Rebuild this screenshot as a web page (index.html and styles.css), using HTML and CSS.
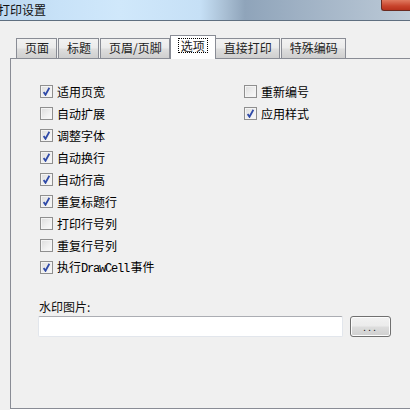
FILE: index.html
```html
<!DOCTYPE html>
<html lang="zh">
<head>
<meta charset="utf-8">
<title>打印设置</title>
<link rel="stylesheet" href="styles.css">
</head>
<body>
<div class="window">
  <div class="titlebar">
    <span class="title">打印设置</span>
    <span class="close"></span>
  </div>
  <div class="client">
    <div class="tabs">
      <div class="tab">页面</div>
      <div class="tab">标题</div>
      <div class="tab">页眉/页脚</div>
      <div class="tab tab-active"><span class="focus">选项</span></div>
      <div class="tab">直接打印</div>
      <div class="tab">特殊编码</div>
    </div>
    <div class="panel">
      <div class="options">
        <div class="col">
          <label class="check"><span class="box on"></span><span>适用页宽</span></label>
          <label class="check"><span class="box"></span><span>自动扩展</span></label>
          <label class="check"><span class="box on"></span><span>调整字体</span></label>
          <label class="check"><span class="box on"></span><span>自动换行</span></label>
          <label class="check"><span class="box on"></span><span>自动行高</span></label>
          <label class="check"><span class="box on"></span><span>重复标题行</span></label>
          <label class="check"><span class="box"></span><span>打印行号列</span></label>
          <label class="check"><span class="box"></span><span>重复行号列</span></label>
          <label class="check"><span class="box on"></span><span>执行<span class="latin">DrawCell</span>事件</span></label>
        </div>
        <div class="col">
          <label class="check"><span class="box"></span><span>重新编号</span></label>
          <label class="check"><span class="box on"></span><span>应用样式</span></label>
        </div>
      </div>
      <div class="watermark">
        <div class="wm-label">水印图片:</div>
        <div class="wm-row">
          <div class="input"></div>
          <div class="button">...</div>
        </div>
      </div>
    </div>
  </div>
</div>
</body>
</html>
```
FILE: styles.css
```css
html, body {
  margin: 0;
  padding: 0;
}
body {
  background: #f0f0f0;
  font-family: "Noto Sans CJK SC", "Noto Sans", sans-serif;
  font-size: 12px;
  color: #000;
  text-autospace: no-autospace;
}
.window {
  width: 410px;
  height: 410px;
  overflow: hidden;
  background: #f0f0f0;
}
.titlebar {
  height: 20px;
  border-bottom: 1px solid #5f6f80;
  display: flex;
  align-items: flex-start;
  background: linear-gradient(90deg, #bcd8f0 0px, #c8e2f8 60px, #d0e8fb 120px, #c6e0f6 200px, #a9bfd4 225px, #8fa4ba 245px, #9fb1c4 300px, #b4c3d2 380px, #c0ccd8 410px);
}
.title {
  margin-left: -2px;
  margin-top: 2px;
  font-size: 12px;
  line-height: 16px;
  color: #111;
}
.close {
  margin-left: auto;
  width: 28px;
  height: 10px;
  background: linear-gradient(180deg, #e07a60 0%, #c8442c 60%, #b8321c 100%);
  border: 1px solid #6a2a20;
  border-top: none;
  border-right: none;
  border-bottom-left-radius: 3px;
}
.client {
  padding: 14px 0 0 10px;
}
.tabs {
  display: flex;
  align-items: flex-start;
  height: 24px;
  margin-left: 6px;
  margin-bottom: -1px;
  position: relative;
  z-index: 1;
}
.tab {
  margin-top: 3px;
  height: 20px;
  box-sizing: border-box;
  padding: 0 7px 0 8px;
  margin-right: 1px;
  border: 1px solid #898c95;
  border-bottom: none;
  background: linear-gradient(180deg, #f2f2f2 0%, #ebebeb 45%, #dddddd 55%, #cfcfcf 100%);
  line-height: 18px;
  color: #222;
  white-space: nowrap;
}
.tab-active {
  margin-top: 0;
  height: 24px;
  margin-left: -1px;
  margin-right: -1px;
  padding: 2px 7px 0 7px;
  background: #fff;
  line-height: 14px;
}
.focus {
  display: inline-block;
  border: 1px dotted #000;
  padding: 0 2px;
  line-height: 13px;
}
.panel {
  border: 1px solid #898c95;
  border-right: none;
  height: 328px;
  box-shadow: 0 1px 0 #fff;
  padding: 21px 0 0 29px;
  box-sizing: content-box;
}
.options {
  display: grid;
  grid-template-columns: 204px auto;
}
.check {
  display: flex;
  align-items: center;
  height: 22px;
  gap: 4px;
  white-space: nowrap;
}
.box {
  width: 13px;
  height: 13px;
  box-sizing: border-box;
  border: 1px solid #8f8f8f;
  background: linear-gradient(135deg, #dcdcdc 0%, #f0f0f0 60%, #fafafa 100%);
  box-shadow: inset 0 0 0 1px #f4f4f4;
  flex: none;
  position: relative;
}
.box.on::after {
  content: "";
  position: absolute;
  left: 2px;
  top: 1px;
  width: 7px;
  height: 9px;
  background: no-repeat center / 7px 9px url("data:image/svg+xml;utf8,<svg xmlns='http://www.w3.org/2000/svg' width='7' height='9' viewBox='0 0 7 9'><path d='M0.6 5 L2.5 7.8 L6.4 0.8' fill='none' stroke='%232f4aa8' stroke-width='1.8'/></svg>");
}
.latin {
  font-family: "Liberation Mono", monospace;
  font-size: 12px;
  letter-spacing: -1.2px;
  margin-right: 1.5px;
}
.watermark {
  margin-top: 21px;
  margin-left: -1px;
}
.wm-label {
  line-height: 16px;
  color: #111;
}
.wm-row {
  display: flex;
  gap: 7px;
  margin-top: 1px;
  margin-left: -1px;
}
.input {
  width: 305px;
  height: 21px;
  box-sizing: border-box;
  background: #fff;
  border: 1px solid #e2e6ec;
  border-top-color: #abadb3;
  border-radius: 2px;
}
.button {
  width: 41px;
  height: 21px;
  box-sizing: border-box;
  border: 1px solid #707070;
  border-radius: 3px;
  background: linear-gradient(180deg, #f2f2f2 0%, #ebebeb 48%, #dddddd 52%, #cfcfcf 100%);
  box-shadow: inset 0 0 0 1px #fcfcfc;
  font-family: "Liberation Sans", sans-serif;
  font-size: 11px;
  letter-spacing: 2px;
  text-align: center;
  line-height: 20px;
  color: #222;
}
```
